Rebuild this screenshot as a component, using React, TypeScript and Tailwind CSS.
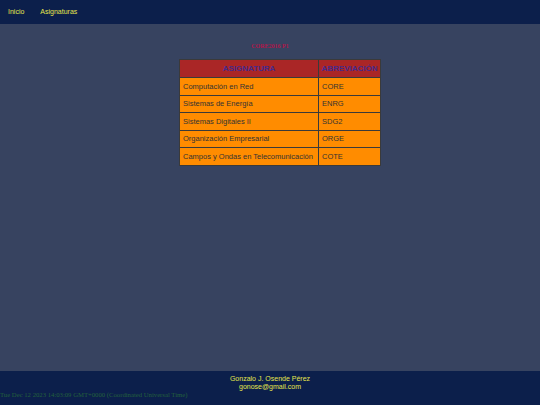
import React from 'react';

const subjects = [
  { name: 'Computación en Red', abbr: 'CORE' },
  { name: 'Sistemas de Energía', abbr: 'ENRG' },
  { name: 'Sistemas Digitales II', abbr: 'SDG2' },
  { name: 'Organización Empresarial', abbr: 'ORGE' },
  { name: 'Campos y Ondas en Telecomunicación', abbr: 'COTE' },
];

export default function App() {
  return (
    <div className="flex h-[405px] w-[540px] flex-col bg-[#374360] font-['Liberation_Sans',Arial,sans-serif]">
      <nav className="flex h-[24px] items-center gap-[16px] bg-[#0c1f4b] px-[8px] text-[7px] text-[#e6e64c]">
        <span>Inicio</span>
        <span>Asignaturas</span>
      </nav>

      <main className="flex flex-1 flex-col items-center">
        <h1 className="mt-[18px] mb-[8px] font-['Liberation_Serif',serif] text-[6px] font-bold text-[#b0174a]">
          CORE2016 P1
        </h1>
        <table className="ml-[179px] w-[202px] self-start border-collapse text-[7.5px] text-[#333333]">
          <thead>
            <tr className="h-[18px] bg-[#aa2626] text-[#452a8c]">
              <th className="w-[139px] border border-[#3a3a3a] text-[8px] font-bold">ASIGNATURA</th>
              <th className="border border-[#3a3a3a] text-[8px] font-bold">ABREVIACIÓN</th>
            </tr>
          </thead>
          <tbody>
            {subjects.map((s) => (
              <tr key={s.abbr} className="h-[17.5px] bg-[#ff8c00]">
                <td className="whitespace-nowrap border border-[#3a3a3a] px-[3px]">{s.name}</td>
                <td className="whitespace-nowrap border border-[#3a3a3a] px-[3px]">{s.abbr}</td>
              </tr>
            ))}
          </tbody>
        </table>
      </main>

      <footer className="h-[34px] bg-[#0c1f4b] pt-[4px]">
        <div className="text-center text-[7px] leading-[8px] text-[#e6e64c]">
          <div>Gonzalo J. Osende Pérez</div>
          <div>gonose@gmail.com</div>
        </div>
        <div className="font-['Liberation_Serif',serif] text-[6.7px] leading-[8px] text-[#23603c]">
          Tue Dec 12 2023 14:03:09 GMT+0000 (Coordinated Universal Time)
        </div>
      </footer>
    </div>
  );
}
